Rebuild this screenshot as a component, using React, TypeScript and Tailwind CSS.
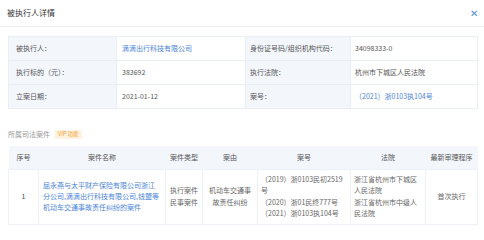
const font = { fontFamily: '"Noto Sans CJK SC", "Noto Sans", sans-serif' }

const infoRows = [
  { l1: '被执行人：', v1: '滴滴出行科技有限公司', link1: true, l2: '身份证号码/组织机构代码：', v2: '34098333-0', link2: false },
  { l1: '执行标的（元）：', v1: '383692', link1: false, l2: '执行法院：', v2: '杭州市下城区人民法院', link2: false },
  { l1: '立案日期：', v1: '2021-01-12', link1: false, l2: '案号：', v2: '（2021）浙0103执104号', link2: true },
]

const headers = ['序号', '案件名称', '案件类型', '案由', '案号', '法院', '最新审理程序']

const App = () => {
  return (
    <div className="h-[240px] w-[484px] overflow-hidden bg-white text-[7px] text-[#555]" style={font}>
      <div className="flex h-[27px] items-center justify-between border-b border-[#eeeeee] pl-[7px] pr-[6px]">
        <span className="text-[8px] text-[#333]">被执行人详情</span>
        <span className="text-[10px] leading-none text-[#4b8ad6]">✕</span>
      </div>

      <div className="pl-[8px] pr-[7px] pt-[9px]">
        <table className="w-[469px] table-fixed border-collapse">
          <colgroup>
            <col className="w-[108px]" />
            <col className="w-[129px]" />
            <col className="w-[105px]" />
            <col className="w-[127px]" />
          </colgroup>
          <tbody>
            {infoRows.map((r) => (
              <tr key={r.l1} className="h-[24px]">
                <td className="border border-[#e9eef5] bg-[#f3f7fc] px-[7px]">{r.l1}</td>
                <td className={`border border-[#e9eef5] px-[5px] ${r.link1 ? 'text-[#4a84d6]' : 'text-[#555]'}`}>{r.v1}</td>
                <td className="border border-[#e9eef5] bg-[#f3f7fc] px-[4px]">{r.l2}</td>
                <td className={`border border-[#e9eef5] px-[4px] ${r.link2 ? 'text-[#4a84d6]' : 'text-[#555]'}`}>{r.v2}</td>
              </tr>
            ))}
          </tbody>
        </table>

        <div className="mt-[20px] flex h-[10px] items-center gap-[5px]">
          <span className="text-[#999]">所属司法案件</span>
          <span className="rounded-[1px] bg-[#fff2df] px-[3px] text-[5.5px] leading-[9px] text-[#f0a030]">VIP 功能</span>
        </div>

        <table className="mt-[7px] w-[469px] table-fixed border-collapse">
          <colgroup>
            <col className="w-[30px]" />
            <col className="w-[127px]" />
            <col className="w-[37px]" />
            <col className="w-[55px]" />
            <col className="w-[93px]" />
            <col className="w-[75px]" />
            <col className="w-[52px]" />
          </colgroup>
          <thead>
            <tr className="h-[23px] bg-[#f3f7fc]">
              {headers.map((h) => (
                <th key={h} className="p-0 text-center font-normal text-[#555]">{h}</th>
              ))}
            </tr>
          </thead>
          <tbody className="leading-[11.3px] text-[#666]">
            <tr className="h-[55px]">
              <td className="border border-[#eef1f5] text-center text-[#444]">1</td>
              <td className="border border-[#eef1f5] px-[4px] text-[#4a84d6]">
                <div>屈永燕与太平财产保险有限公司浙江</div>
                <div>分公司,滴滴出行科技有限公司,钱盟等</div>
                <div>机动车交通事故责任纠纷的案件</div>
              </td>
              <td className="border border-[#eef1f5] px-[2px] text-center">
                <div>执行案件</div>
                <div>民事案件</div>
              </td>
              <td className="border border-[#eef1f5] px-[4px] text-center">机动车交通事故责任纠纷</td>
              <td className="border border-[#eef1f5] px-[3px]">
                <div>（2019）浙0103民初2519号</div>
                <div>（2020）浙01民终777号</div>
                <div>（2021）浙0103执104号</div>
              </td>
              <td className="border border-[#eef1f5] px-[3px]">
                <div>浙江省杭州市下城区人民法院</div>
                <div>浙江省杭州市中级人民法院</div>
              </td>
              <td className="border border-[#eef1f5] text-center">首次执行</td>
            </tr>
          </tbody>
        </table>
      </div>
    </div>
  )
}

export default App
